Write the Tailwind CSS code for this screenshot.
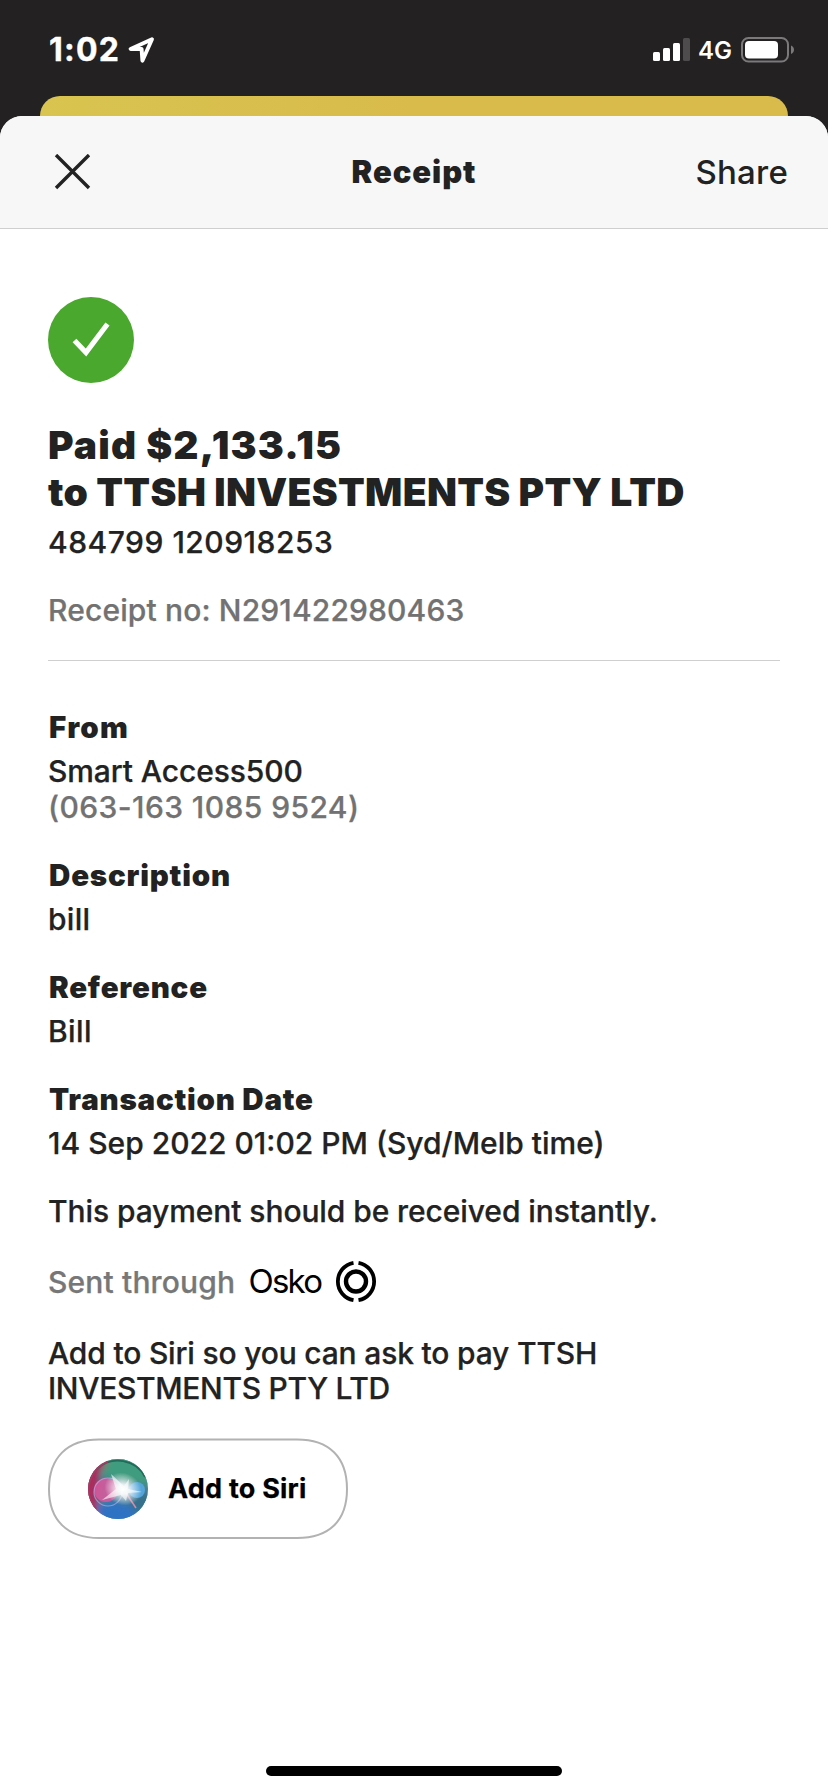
<!DOCTYPE html>
<html lang="en">
<head>
<meta charset="utf-8">
<title>Receipt</title>
<script src="https://cdn.jsdelivr.net/npm/@tailwindcss/browser@4"></script>
</head>
<body class="bg-[#232122] font-['Inter',sans-serif] text-[#222]">
<div class="flex h-[1792px] w-[828px] flex-col overflow-hidden">
  <!-- Status bar -->
  <div class="flex h-24 shrink-0 items-start justify-between pl-[49px] pr-[33px] text-white">
    <div class="flex items-start pt-[30px]">
      <span class="w-[79px] text-[32px] leading-10 font-bold tracking-[1.2px] [-webkit-text-stroke:0.4px]">1:02</span>
      <svg class="mt-[6px]" width="28" height="28" viewBox="0 0 28 28" fill="none" stroke="#fff" stroke-width="3.900" stroke-linejoin="round"><path d="M24 3.300 2.600 13H13.600L14.400 24.700Z"/></svg>
    </div>
    <div class="flex items-start pt-[36px]">
      <svg class="mt-[2px]" width="38" height="24" viewBox="0 0 38 24" fill="#fff"><rect y="14" width="7" height="9" rx="1.5"/><rect x="10" y="10" width="7" height="13" rx="1.5"/><rect x="20" y="5" width="7" height="18" rx="1.5"/><rect x="30" width="7" height="23" rx="1.5" fill="#4e4c4d"/></svg>
      <span class="ml-[7px] w-[43px] text-[24px] leading-[30px] font-semibold">4G</span>
      <svg width="54" height="27" viewBox="0 0 54 27"><rect x="1" y="2" width="46" height="23.5" rx="6.5" fill="none" stroke="#7b797a" stroke-width="2"/><rect x="4" y="5" width="33" height="17.5" rx="4" fill="#fff"/><path d="M50 9.5c4 1.300 4 7.200 0 8.500z" fill="#7b797a"/></svg>
    </div>
  </div>
  <!-- Card behind the sheet -->
  <div class="mx-10 h-10 shrink-0 rounded-t-[20px] bg-linear-to-r from-[#d9c450] to-[#d8bb4b] to-50%"></div>
  <!-- Sheet -->
  <div class="relative -mt-5 flex grow flex-col overflow-hidden rounded-t-[22px] bg-white">
    <header class="grid h-[113px] shrink-0 grid-cols-3 items-center border-b border-[#cfcfcf] bg-[#f7f7f7] px-10">
      <svg class="ml-[14px]" width="37" height="37" viewBox="0 0 37 37" fill="none" stroke="#222" stroke-width="3.400"><path d="M2 1 35 34M35 1 2 34"/></svg>
      <h1 class="text-center text-[31px] leading-10 font-black tracking-[0.94px]">Receipt</h1>
      <span class="text-right text-[33px] leading-10 font-medium tracking-[0.2px]">Share</span>
    </header>
    <main class="flex grow flex-col items-start px-12 pt-[68px] text-[30px] leading-9 font-medium [-webkit-text-stroke:0.25px]">
      <svg width="86" height="86" viewBox="0 0 86 86"><circle cx="43" cy="43" r="43" fill="#4ba82e"/><path d="M26.500 43.500 38 55.500 59.500 27" fill="none" stroke="#fff" stroke-width="5.200"/></svg>
      <h2 class="mt-[38px] text-[39px] leading-[47px] font-black whitespace-nowrap [-webkit-text-stroke:0px]"><span class="tracking-[1.15px]">Paid $2,133.15</span><br><span class="tracking-[0.3px]">to TTSH INVESTMENTS PTY LTD</span></h2>
      <p class="mt-[9px] tracking-[0.5px]">484799 120918253</p>
      <p class="mt-8 tracking-[0.14px] text-[#727272]">Receipt no: N291422980463</p>
      <hr class="mt-8 w-full border-t border-[#cfcfcf]">
      <h3 class="mt-12 ml-px text-[29.5px] font-black tracking-[1.3px] [-webkit-text-stroke:0px]">From</h3>
      <p class="mt-2 tracking-[-0.1px]">Smart Access500</p>
      <p class="tracking-[0.41px] text-[#727272]">(063-163 1085 9524)</p>
      <h3 class="mt-8 ml-px text-[29.5px] font-black tracking-[0.81px] [-webkit-text-stroke:0px]">Description</h3>
      <p class="mt-2 tracking-[0.28px]">bill</p>
      <h3 class="mt-8 ml-px text-[29.5px] font-black tracking-[0.78px] [-webkit-text-stroke:0px]">Reference</h3>
      <p class="mt-2 tracking-[0.4px]">Bill</p>
      <h3 class="mt-8 ml-px text-[29.5px] font-black tracking-[0.77px] [-webkit-text-stroke:0px]">Transaction Date</h3>
      <p class="mt-2">14 Sep 2022 01:02 PM (Syd/Melb time)</p>
      <p class="mt-8 tracking-[-0.09px]">This payment should be received instantly.</p>
      <div class="mt-[35px] flex h-9 items-center">
        <span class="w-[201px] tracking-[0.15px] text-[#777]">Sent through</span>
        <svg class="overflow-visible" width="128" height="44" viewBox="0 0 128 44">
          <text x="-0.500" y="33.200" textLength="74.500" font-family="Inter, sans-serif" font-weight="400" font-size="33" fill="#000">Osko</text>
          <g fill="none" stroke="#000"><circle cx="107" cy="21.500" r="10" stroke-width="4.400"/><path d="M104.500 2.800A19 19 0 0 0 104.500 40.200M109.500 2.800A19 19 0 0 1 109.500 40.200" stroke-width="3.800"/></g>
        </svg>
      </div>
      <p class="mt-9 leading-[35px]"><span class="tracking-[-0.18px]">Add to Siri so you can ask to pay TTSH</span><br><span class="tracking-[-0.32px]">INVESTMENTS PTY LTD</span></p>
      <button class="relative mt-8 flex h-[101px] w-[300px] items-center pl-10 text-[27px] font-bold tracking-[0.23px] text-black">
        <svg class="absolute inset-0" width="300" height="101" viewBox="0 0 300 101" fill="none" stroke="#b2b2b2" stroke-width="2"><path d="M51 1.500H249C281 1.500 299 19 299 51S281 100 249 100H51C19 100 1 82 1 51S19 1.500 51 1.500Z"/></svg>
        <svg width="60" height="60" viewBox="0 0 60 60">
          <defs>
            <clipPath id="orb"><circle cx="30" cy="30" r="30"/></clipPath>
            <filter id="soft" x="-50%" y="-50%" width="200%" height="200%"><feGaussianBlur stdDeviation="3.500"/></filter>
            <filter id="fine" x="-50%" y="-50%" width="200%" height="200%"><feGaussianBlur stdDeviation="0.700"/></filter>
            <radialGradient id="glow"><stop offset="0" stop-color="#fff"/><stop offset=".3" stop-color="#fff" stop-opacity=".85"/><stop offset="1" stop-color="#fff" stop-opacity="0"/></radialGradient>
          </defs>
          <g clip-path="url(#orb)">
            <rect width="60" height="60" fill="#4a7f92"/>
            <g filter="url(#soft)">
              <path d="M-5-5H24L12 12 8 36 16 62H-5Z" fill="#b0285a"/>
              <path d="M20-4H64V26L40 24 14 16Z" fill="#3f9c7e"/>
              <path d="M6 48 26 42 40 46 50 52 44 66H14Z" fill="#2f72c4"/>
              <path d="M38 38 62 34V56L46 52Z" fill="#34708c"/>
            </g>
            <g filter="url(#fine)">
              <circle cx="18" cy="31" r="12" fill="#e4559f" fill-opacity=".8"/>
              <circle cx="49" cy="31" r="8" fill="#55aae6" fill-opacity=".85"/>
              <circle cx="20" cy="33" r="14" fill="none" stroke="#b9b7ee" stroke-opacity=".6" stroke-width="1.200"/>
              <path d="M38 34 48 49" stroke="#d38aa8" stroke-width="1.500"/>
            </g>
            <ellipse cx="35" cy="30" rx="19" ry="16" fill="url(#glow)" transform="rotate(22 35 30)"/>
            <path d="M23 15 36 27 41 20 40 30 54 33 40 34 38 42 33 36 14 41 28 30Z" fill="#fff" fill-opacity=".6" filter="url(#fine)"/>
            <path d="M9 10A30 29 0 0 1 57 18" fill="none" stroke="#226b5a" stroke-width="1.800" filter="url(#fine)"/>
            <path d="M20 2A30 30 0 0 0 8 50" fill="none" stroke="#a43b62" stroke-width="2.500" filter="url(#fine)"/>
          </g>
        </svg>
        <span class="ml-5">Add to Siri</span>
      </button>
    </main>
    <div class="mx-auto mb-4 h-[10px] w-[296px] rounded-full bg-black"></div>
  </div>
</div>
</body>
</html>
